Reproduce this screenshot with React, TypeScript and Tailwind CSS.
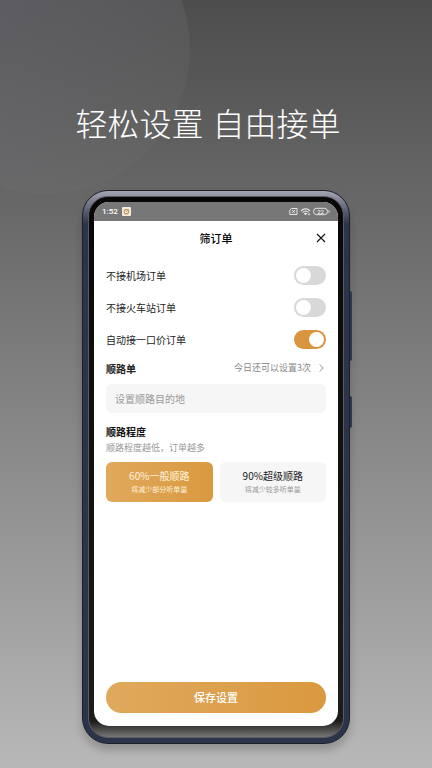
import { useState } from "react";

type ToggleProps = {
  id: string;
  label: string;
  defaultChecked?: boolean;
};

function Toggle({ id, label, defaultChecked = false }: ToggleProps) {
  return (
    <div className="flex h-8 items-center justify-between">
      <label htmlFor={id} className="text-[10px] text-[#222]">{label}</label>
      <span className="relative h-[19px] w-8">
        <input
          id={id}
          type="checkbox"
          role="switch"
          defaultChecked={defaultChecked}
          className="peer block h-full w-full cursor-pointer appearance-none rounded-full bg-[#d8d8d8] checked:bg-[#d8953e]"
        />
        <span className="pointer-events-none absolute top-0.5 left-0.5 size-[15px] rounded-full bg-white peer-checked:left-[15px]" />
      </span>
    </div>
  );
}

const levels = [
  { id: "normal", title: "60%一般顺路", hint: "将减少部分听单量" },
  { id: "super", title: "90%超级顺路", hint: "将减少较多听单量" },
];

function StatusBar() {
  return (
    <div className="flex h-[19px] items-center bg-[#777] px-2 text-[8px] text-white">
      <span className="font-[family-name:Roboto] font-medium">1:52</span>
      <svg viewBox="0 0 9 9" className="ml-1 size-[9px]">
        <rect width="9" height="9" rx="1" fill="#f4ece0" />
        <circle cx="4.4" cy="4.6" r="2.3" fill="none" stroke="#c59a60" strokeWidth="1.2" />
        <path d="M4 5l3-3" stroke="#c59a60" />
      </svg>
      <svg viewBox="0 0 41 9" className="ml-auto h-[9px] w-[41px]" fill="none" stroke="#f2f2f2" strokeWidth="0.9">
        <path d="M2.4 1.5H8v6H.8V3zM3 3l3.2 3M6.2 3L3 6" />
        <path d="M12 3.8c2.7-2.7 6.3-2.7 9 0M13.6 5.4c1.8-1.7 4-1.7 5.8 0" strokeWidth="1.1" />
        <path d="M14.8 6.4c1.1-.9 2.3-.9 3.4 0l-1.7 1.9z" fill="#f2f2f2" stroke="none" />
        <path d="M20 6.2v2.2M18.9 7.3h2.2" strokeWidth="0.7" />
        <rect x="24.5" y="1.3" width="14" height="6.4" rx="3.2" />
        <path d="M40 3.3v2.4" />
        <text x="31.5" y="6.6" textAnchor="middle" fontFamily="Roboto" fontSize="6" fill="#fff" stroke="none">22</text>
      </svg>
    </div>
  );
}

function FilterScreen() {
  const [level, setLevel] = useState("normal");

  return (
    <div className="flex flex-1 flex-col overflow-hidden rounded-[15px] bg-white">
      <StatusBar />
      <header className="relative flex h-[34px] items-center justify-center">
        <h2 className="text-[11px] font-medium text-black">筛订单</h2>
        <button type="button" aria-label="关闭" className="absolute right-2 p-1">
          <svg viewBox="0 0 10 10" className="size-[10px]" stroke="#111" strokeWidth="1.1">
            <path d="M1 1l8 8M9 1L1 9" />
          </svg>
        </button>
      </header>

      <form className="flex flex-1 flex-col px-3 pt-1 pb-[13px]" onSubmit={(e) => e.preventDefault()}>
        <div>
          <Toggle id="airport" label="不接机场订单" />
          <Toggle id="station" label="不接火车站订单" />
          <Toggle id="fixed-price" label="自动接一口价订单" defaultChecked />
        </div>

        <div className="flex h-[26px] items-center justify-between">
          <label htmlFor="destination" className="text-[10px] font-bold text-[#222]">顺路单</label>
          <button type="button" className="flex items-center gap-2 pr-0.5 text-[9px] text-[#888]">
            今日还可以设置3次
            <svg viewBox="0 0 5 8" className="h-2 w-[5px]" fill="none" stroke="#888" strokeWidth="0.9">
              <path d="M.7.5L4.2 4 .7 7.5" />
            </svg>
          </button>
        </div>
        <input
          id="destination"
          type="text"
          placeholder="设置顺路目的地"
          className="mt-[3px] h-[29px] w-full rounded-md bg-[#f6f6f6] px-[9px] text-[10px] text-[#222] outline-none placeholder:text-[#999]"
        />

        <h3 className="mt-[11px] text-[10px] leading-4 font-bold text-[#111]">顺路程度</h3>
        <p className="text-[9px] leading-4 text-[#999]">顺路程度越低，订单越多</p>
        <div className="mt-[6px] grid grid-cols-2 gap-[7px]">
          {levels.map(({ id, title, hint }) => (
            <button
              key={id}
              type="button"
              aria-pressed={level === id}
              onClick={() => setLevel(id)}
              className={`flex h-10 flex-col items-center justify-center rounded-md ${
                level === id
                  ? "bg-linear-to-r from-[#e0a95c] to-[#da993f] text-[#fff3dc]"
                  : "bg-[#f6f6f6] text-[#222]"
              }`}
            >
              <span className="text-[10px] leading-[14px]">{title}</span>
              <span className={`text-[7px] leading-3 ${level === id ? "" : "text-[#999]"}`}>{hint}</span>
            </button>
          ))}
        </div>

        <button
          type="submit"
          className="mt-auto h-[31px] w-full rounded-full bg-linear-to-r from-[#e0a95c] to-[#da993f] text-[11px] font-medium text-white"
        >
          保存设置
        </button>
      </form>
    </div>
  );
}

export default function App() {
  return (
    <main className="relative flex min-h-screen flex-col items-center overflow-hidden bg-linear-to-b from-[#4d4d4d] to-[#b8b8b8] px-4 pb-6 font-['Noto_Sans_CJK_SC',sans-serif]">
      <div className="absolute -top-24 -left-[100px] size-[290px] rounded-full bg-linear-to-br from-[#73718a]/50 via-[#73737a]/35 to-[#808080]/5" />
      <h1 className="relative flex gap-[9px] pt-[98px] pr-4 text-[32px] leading-[48px] font-light text-white">
        <span>轻松设置</span>
        <span>自由接单</span>
      </h1>

      <div className="relative mt-11 flex w-full max-w-[268px] flex-1 rounded-[26px] border border-[#1c1e28] bg-linear-to-b from-[#a5a5b2] via-[#2c344b] via-6% to-[#2c344b] p-[5px] shadow-[0_6px_8px_rgba(0,0,0,0.2)]">
        <div className="absolute top-[100px] -right-[3px] h-[70px] w-0.5 rounded-r bg-[#303850]" />
        <div className="absolute top-[205px] -right-[3px] h-8 w-0.5 rounded-r bg-[#303850]" />
        <div className="flex flex-1 rounded-[20px] border border-[#5c5c60] bg-linear-to-b from-[#080808] via-[#1c1c1a] via-97% to-[#777] p-[5px] pb-[11px]">
          <FilterScreen />
        </div>
      </div>
    </main>
  );
}
